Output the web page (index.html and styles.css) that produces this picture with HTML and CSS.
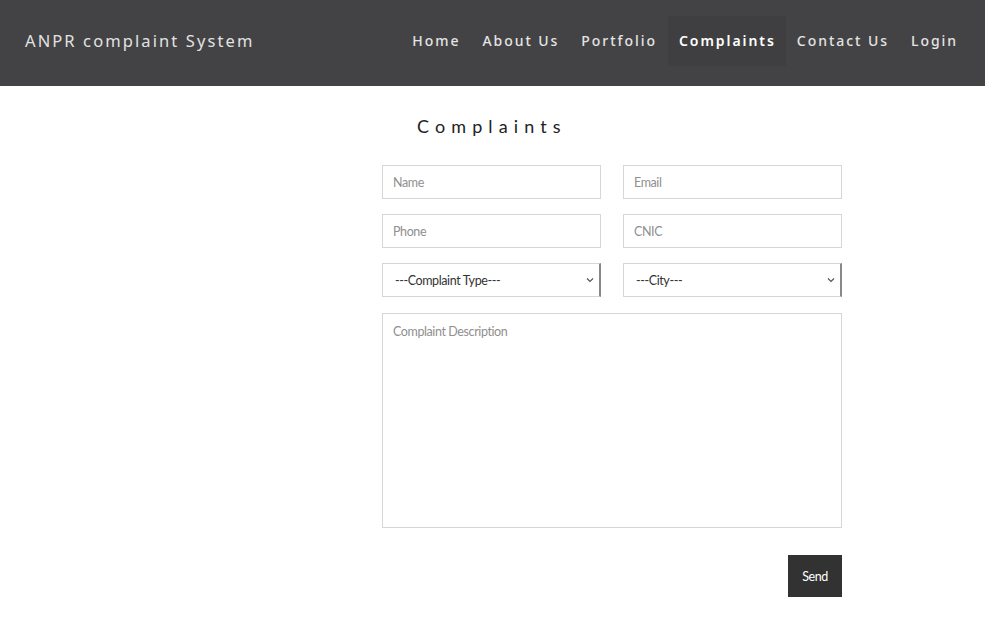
FILE: index.html
```html
<!DOCTYPE html>
<html>
<head>
<meta charset="utf-8">
<link rel="stylesheet" href="styles.css">
</head>
<body>
<header class="topbar">
  <div class="brand">ANPR complaint System</div>
  <nav class="nav">
    <a class="nav-item">Home</a>
    <a class="nav-item">About Us</a>
    <a class="nav-item">Portfolio</a>
    <a class="nav-item active">Complaints</a>
    <a class="nav-item">Contact Us</a>
    <a class="nav-item">Login</a>
  </nav>
</header>
<main class="main">
  <section class="form-wrap">
    <h2 class="title">Complaints</h2>
    <form class="form">
      <div class="row">
        <input class="field" placeholder="Name">
        <input class="field" placeholder="Email">
      </div>
      <div class="row">
        <input class="field" placeholder="Phone">
        <input class="field" placeholder="CNIC">
      </div>
      <div class="row">
        <div class="select-box">
          <select class="field select"><option>---Complaint Type---</option></select>
          <svg class="chev" width="8" height="6" viewBox="0 0 8 6"><path d="M1 1.5 L4 4.5 L7 1.5" fill="none" stroke="#555" stroke-width="1.2"/></svg>
        </div>
        <div class="select-box">
          <select class="field select"><option>---City---</option></select>
          <svg class="chev" width="8" height="6" viewBox="0 0 8 6"><path d="M1 1.5 L4 4.5 L7 1.5" fill="none" stroke="#555" stroke-width="1.2"/></svg>
        </div>
      </div>
      <textarea class="field area" placeholder="Complaint Description"></textarea>
      <div class="actions">
        <button type="button" class="send">Send</button>
      </div>
    </form>
  </section>
</main>
</body>
</html>
```
FILE: styles.css
```css
* { box-sizing: border-box; }
body {
  margin: 0;
  background: #fff;
  font-family: Lato, "Liberation Sans", sans-serif;
}
.topbar {
  height: 86px;
  background: #434345;
  display: flex;
  align-items: center;
  justify-content: space-between;
  padding: 0 16px 5px 25px;
}
.brand {
  color: #e2e2e2;
  font-family: "Noto Sans", sans-serif;
  font-size: 16.5px;
  letter-spacing: 2.1px;
  font-weight: 400;
}
.nav {
  display: flex;
  align-items: center;
}
.nav-item {
  color: #e4e4e4;
  font-family: "Noto Sans", sans-serif;
  font-size: 14px;
  letter-spacing: 1.95px;
  font-weight: 500;
  padding: 16px 11px 16px 11px;
  line-height: 18px;
}
.nav-item.active {
  background: #3f3f41;
  color: #fff;
  font-weight: 600;
  padding: 16px 10px 16px 11px;
}
.main {
  padding-top: 32px;
}
.form-wrap {
  width: 460px;
  margin-left: 382px;
}
.title {
  margin: 0 0 31px 35px;
  font-family: Lato, sans-serif;
  font-weight: 400;
  font-size: 18px;
  letter-spacing: 6.1px;
  color: #222;
  line-height: 16px;
}
.form {
  display: flex;
  flex-direction: column;
  gap: 15px;
}
.row {
  display: grid;
  grid-template-columns: 219px 219px;
  column-gap: 22px;
}
.field {
  height: 34px;
  width: 100%;
  border: 1px solid #d6d6d6;
  background: #fff;
  padding: 0 10px;
  font-family: Lato, sans-serif;
  font-size: 12.5px;
  letter-spacing: -0.4px;
  color: #333;
  outline: none;
  border-radius: 0;
}
.field::placeholder { color: #8f8f8f; }
.select-box { position: relative; }
.select {
  appearance: none;
  -webkit-appearance: none;
  color: #333;
  padding-left: 12px;
  border-right: 2px solid #888;
}
.chev {
  position: absolute;
  right: 7px;
  top: 14px;
}
.area {
  height: 215px;
  padding-top: 10px;
  resize: none;
  margin-top: 1px;
}
.actions {
  display: flex;
  justify-content: flex-end;
  padding-top: 12px;
}
.send {
  width: 54px;
  height: 42px;
  background: #323232;
  color: #fff;
  border: none;
  font-family: Lato, sans-serif;
  font-size: 12.5px;
  letter-spacing: -0.4px;
}
```
